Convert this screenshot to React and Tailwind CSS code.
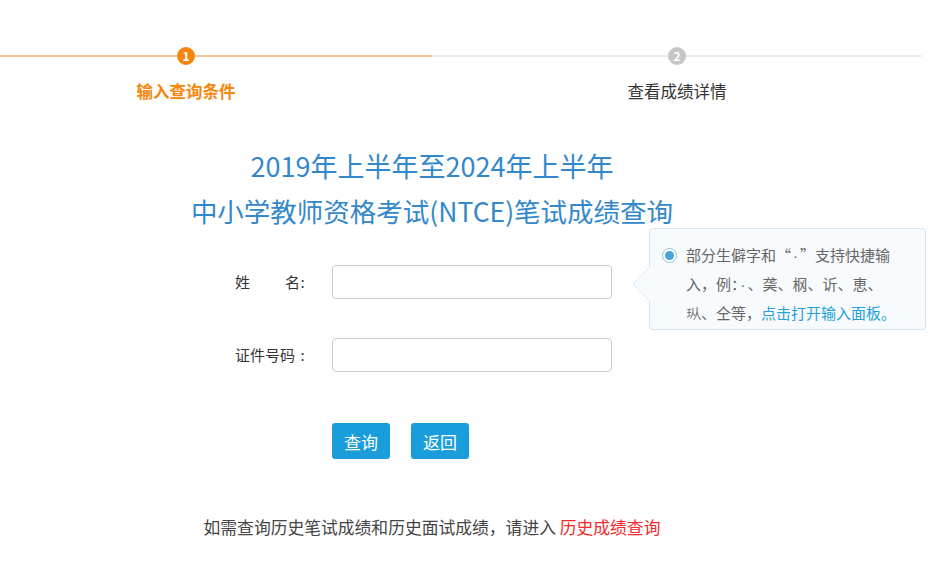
import React from "react";

const font = { fontFamily: '"Noto Sans CJK SC", "Noto Sans", sans-serif' };

function Step({ num, label, active, width, extra }) {
  return (
    <div className={`relative flex flex-col items-center ${width} ${extra}`}>
      <div
        className={`absolute left-0 right-0 top-[8px] h-[2px] ${
          active ? "bg-[#fcc690]" : "bg-[#ededed]"
        }`}
      />
      <div
        className={`relative z-10 w-[18px] h-[18px] rounded-full flex items-center justify-center text-white text-[12px] font-bold leading-none ${
          active ? "bg-[#f5860b]" : "bg-[#c6c6c6]"
        }`}
      >
        {num}
      </div>
      <div
        className={`mt-[14px] text-[16.5px] leading-[24px] ${
          active ? "text-[#f5860b] font-bold" : "text-[#333]"
        }`}
      >
        {label}
      </div>
    </div>
  );
}

// narrow middle dot, the CJK one is full width
const Dot = () => <span className="font-['Liberation_Sans'] px-[2px]">·</span>;

function Tip() {
  return (
    <div className="absolute left-[649px] top-[228px] w-[277px] h-[102px] rounded-[4px] border border-[#d5e5f1] bg-[#f7fbfd] pl-[12px] pt-[12px]">
      {/* arrow */}
      <svg
        className="absolute left-[-18px] top-[37px]"
        width="19"
        height="36"
        viewBox="0 0 19 36"
      >
        <path d="M18.5 0 L1 18 L18.5 36 Z" fill="#f7fbfd" />
        <path d="M18.5 0 L1 18 L18.5 36" fill="none" stroke="#d5e5f1" strokeWidth="1" />
      </svg>
      <div className="flex">
        <div className="mt-[7px] w-[15px] h-[15px] rounded-full border border-[#8cc1e3] bg-white flex items-center justify-center shrink-0">
          <div className="w-[9px] h-[9px] rounded-full bg-[#4aa3d8]" />
        </div>
        <div className="ml-[9px] w-[216px] text-[15px] leading-[28px] text-[#666]">
          <div>
            部分生僻字和“<Dot />”支持快捷输
          </div>
          <div>
            入，例：<Dot />、䶮、㭎、䜣、恵、
          </div>
          <div>
            𪻐、仝等，<span className="text-[#25a0dc]">点击打开输入面板。</span>
          </div>
        </div>
      </div>
    </div>
  );
}

function Field({ children }) {
  return (
    <div className="flex items-center pl-[235px]">
      <span className="w-[75px] flex text-[15px] text-[#333]">
        {children}
        <span className="w-[15px] text-center">:</span>
      </span>
      <input
        type="text"
        className="ml-[22px] w-[280px] h-[34px] rounded-[4px] border border-[#cccccc] bg-white px-2 outline-none"
      />
    </div>
  );
}

export default function App() {
  return (
    <div className="relative w-[936px] h-[573px] bg-white overflow-hidden" style={font}>
      <div className="pt-[47px] flex">
        <Step num="1" label="输入查询条件" active width="w-[432px]" extra="pr-[60px]" />
        <Step num="2" label="查看成绩详情" width="w-[490px]" />
      </div>

      <div className="w-[864px]">
        <h1 className="mt-[40px] text-center leading-[45px] text-[#3388cc] font-normal">
          <div className="text-[27px]">2019年上半年至2024年上半年</div>
          <div className="text-[26.5px]">中小学教师资格考试(NTCE)笔试成绩查询</div>
        </h1>

        <div className="mt-[32px] flex flex-col gap-[39px]">
          <Field>
            <span className="w-[50px]">姓</span>
            <span className="w-[10px]">名</span>
          </Field>
          <Field>证件号码</Field>
        </div>

        <div className="mt-[51px] pl-[332px] flex gap-[21px]">
          <button className="w-[58px] h-[36px] rounded-[3px] bg-[#199ddb] text-white text-[17px] leading-none">
            查询
          </button>
          <button className="w-[58px] h-[36px] rounded-[3px] bg-[#199ddb] text-white text-[17px] leading-none">
            返回
          </button>
        </div>

        <p className="mt-[56px] text-center text-[16.8px] leading-[24px] text-[#444]">
          如需查询历史笔试成绩和历史面试成绩，请进入{" "}
          <a className="text-[#f22a2a] cursor-pointer">历史成绩查询</a>
        </p>
      </div>

      <Tip />
    </div>
  );
}
